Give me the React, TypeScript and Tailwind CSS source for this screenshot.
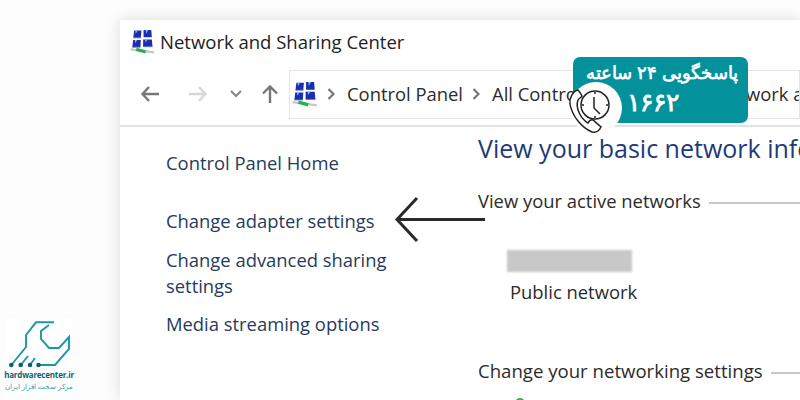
import { FC } from "react";

const NetIcon: FC<{ size: number }> = ({ size }) => {
  return (
    <svg width={size} height={size} viewBox="0 0 24 24" className="shrink-0">
      <path d="M4 1.5h7l-.6 7H3.2zM13 1h7.4l.6 7h-8zM3 10.5h7.4l-.4 7H2.2zM12.6 10H21l.6 7h-9z" fill="#1b2fae" />
      <path d="M5 1.5h2.5L5.5 4.5zM15 1h2.5l-2 3.5zM4.5 10.5h2.5l-2 3zM14.5 10h2.5l-2 3z" fill="#8fb0ee" />
      <path d="M3.2 8.5h7.2M2.2 17.5h7.8M12.6 17h9" stroke="#5f78d8" strokeWidth="0.8" />
      <path d="M0.5 19.5 23 22.5" stroke="#c2c8cb" strokeWidth="2.2" />
      <path d="M6 19.5 15 22" stroke="#27b04a" strokeWidth="3" />
    </svg>
  );
};

const Logo: FC = () => {
  return (
    <div className="absolute left-[6px] top-[318px] w-[66px] h-[79px] bg-white flex flex-col items-center">
      <svg width="66" height="52" viewBox="0 0 66 52" fill="none" stroke="#1a97a5" strokeWidth="1.9">
        <path d="M48 4.3H30L20 17V29L5.3 47M22 38 14.7 47M29 40 24 47" />
        <path d="M43 7 35 13V21L43 30H53L63 19V31L49 47H32" />
        <circle cx="5.3" cy="47" r="2.3" fill="#0f5f6e" stroke="none" />
        <circle cx="14.7" cy="47" r="2.3" fill="#0f5f6e" stroke="none" />
        <circle cx="24" cy="47" r="2.3" fill="#0f5f6e" stroke="none" />
        <circle cx="32.5" cy="47" r="2.3" fill="#0f5f6e" stroke="none" />
      </svg>
      <div className="text-[8px] leading-[10px] font-bold text-[#0f5f6e] font-['Open_Sans',sans-serif] tracking-[-0.2px] whitespace-nowrap">
        hardwarecenter.ir
      </div>
      <div dir="rtl" className="text-[7.2px] leading-[11px] mt-[1px] text-[#2a9aa6] font-['Noto_Sans',sans-serif] whitespace-nowrap">
        مرکز سخت افزار ایران
      </div>
    </div>
  );
};

const Badge: FC = () => {
  return (
    <div className="absolute left-[573px] top-[57px] w-[175px] h-[66px] bg-[#03929b] rounded-[7px]">
      <div dir="rtl" className="text-white font-bold text-[18.4px] leading-[20px] pt-[5px] pr-[10px] font-['Noto_Sans',sans-serif] whitespace-nowrap">
        پاسخگویی ۲۴ ساعته
      </div>
      <div className="text-white font-black text-[25px] leading-[30px] ml-[54px] mt-[4px] font-['Noto_Sans',sans-serif]">
        ۱۶۶۲
      </div>
      <div className="absolute left-[-3px] top-[25px] w-[52px] h-[52px] rounded-full bg-white" />
      <svg width="48" height="50" viewBox="0 0 48 50" fill="none" stroke="#222" strokeWidth="1.5" className="absolute left-[-7px] top-[29px]">
        <circle cx="29" cy="19" r="14" />
        <path d="M29 6v2M29 30v2M42 19h-2M18 19h-2M28 11v11l6 6" />
        <path d="M12 4C7 5 3 12 4 18c2 12 12 24 22 28 4 1 7-1 9-5l-8-7c-2-1-4 1-5 3-7-4-13-15-10-23 1-2 3-2 4-4-1-2-2-4-4-6Z" fill="#fff" />
      </svg>
    </div>
  );
};

const Arrow: FC = () => {
  return (
    <svg width="92" height="48" viewBox="0 0 92 48" fill="none" stroke="#2a2a2a" strokeWidth="3" className="absolute left-[394px] top-[196px]">
      <path d="M91 23.5H3M23 2 3 23.5 23 45" />
    </svg>
  );
};

const Crumb: FC<{ label: string }> = ({ label }) => {
  return (
    <>
      <svg width="8" height="12" viewBox="0 0 8 12" fill="none" stroke="#777" strokeWidth="2.2" className="ml-[9px] shrink-0">
        <path d="m1.5 1 5 5-5 5" />
      </svg>
      <span className="ml-[12px]">{label}</span>
    </>
  );
};

const SectionTitle: FC<{ label: string }> = ({ label }) => {
  return (
    <div className="flex items-center gap-[8px]">
      <span className="whitespace-nowrap">{label}</span>
      <span className="h-[2px] flex-1 bg-[#c8c8c8] mt-[3px]" />
    </div>
  );
};

const App: FC = () => {
  return (
    <div className="relative w-[800px] h-[400px] overflow-hidden bg-[#fdfdfd] pl-[120px] pt-[20px] font-['Open_Sans',sans-serif] text-[18.4px] text-[#2b2b2b]">
      <div className="w-[680px] h-[380px] bg-white overflow-hidden shadow-[0_0_14px_rgba(0,0,0,0.14)]">
        <div className="flex items-center h-[43px] pl-[10px] gap-[5px] text-[18.5px] text-[#222]">
          <NetIcon size={25} />
          <span>Network and Sharing Center</span>
        </div>
        <div className="flex items-center h-[64px] border-b-2 border-[#e2e2e2] pl-[20px]">
          <svg width="20" height="18" viewBox="0 0 20 18" fill="none" stroke="#777" strokeWidth="2.4">
            <path d="M19 9H3M9 2 2.5 9 9 16" />
          </svg>
          <svg width="20" height="18" viewBox="0 0 20 18" fill="none" stroke="#d8d8d8" strokeWidth="2.4" className="ml-[28px]">
            <path d="M1 9h16M11 2l6.5 7-6.5 7" />
          </svg>
          <svg width="12" height="8" viewBox="0 0 12 8" fill="none" stroke="#888" strokeWidth="2.2" className="ml-[22px]">
            <path d="m1 1 5 5 5-5" />
          </svg>
          <svg width="18" height="20" viewBox="0 0 18 20" fill="none" stroke="#777" strokeWidth="2.4" className="ml-[19px]">
            <path d="M9 19V3M2 9.5 9 2.5l7 7" />
          </svg>
          <div className="flex items-center h-[49px] flex-1 ml-[10px] border border-[#e4e4e4] pl-[2px] whitespace-nowrap overflow-hidden">
            <NetIcon size={26} />
            <Crumb label="Control Panel" />
            <Crumb label="All Control Panel Items" />
            <Crumb label="Network and Sharing" />
          </div>
        </div>
        <div className="flex">
          <div className="w-[358px] shrink-0 pl-[46px] pr-[60px] pt-[20px] text-[#263a5c] leading-[26px]">
            <div className="pt-[3px]">Control Panel Home</div>
            <div className="mt-[32px]">Change adapter settings</div>
            <div className="mt-[13px]">Change advanced sharing settings</div>
            <div className="mt-[12px]">Media streaming options</div>
          </div>
          <div className="flex-1 pt-[6px] whitespace-nowrap overflow-hidden">
            <div className="text-[25px] leading-[30px] text-[#1e3a78]">View your basic network information</div>
            <div className="mt-[25px] leading-[26px]">
              <SectionTitle label="View your active networks" />
            </div>
            <div className="pl-[29px] mt-[36px]">
              <div className="w-[125px] h-[22px] bg-[#c8c8c8] blur-[1px]" />
              <div className="mt-[7px] ml-[3px] leading-[26px]">Public network</div>
            </div>
            <div className="mt-[53px] leading-[26px] text-[18.6px]">
              <SectionTitle label="Change your networking settings" />
            </div>
            <div className="ml-[37px] mt-[14px] w-[10px] h-[10px] rounded-full bg-[#35b44a]" />
          </div>
        </div>
      </div>
      <Arrow />
      <Badge />
      <Logo />
    </div>
  );
};

export default App;
